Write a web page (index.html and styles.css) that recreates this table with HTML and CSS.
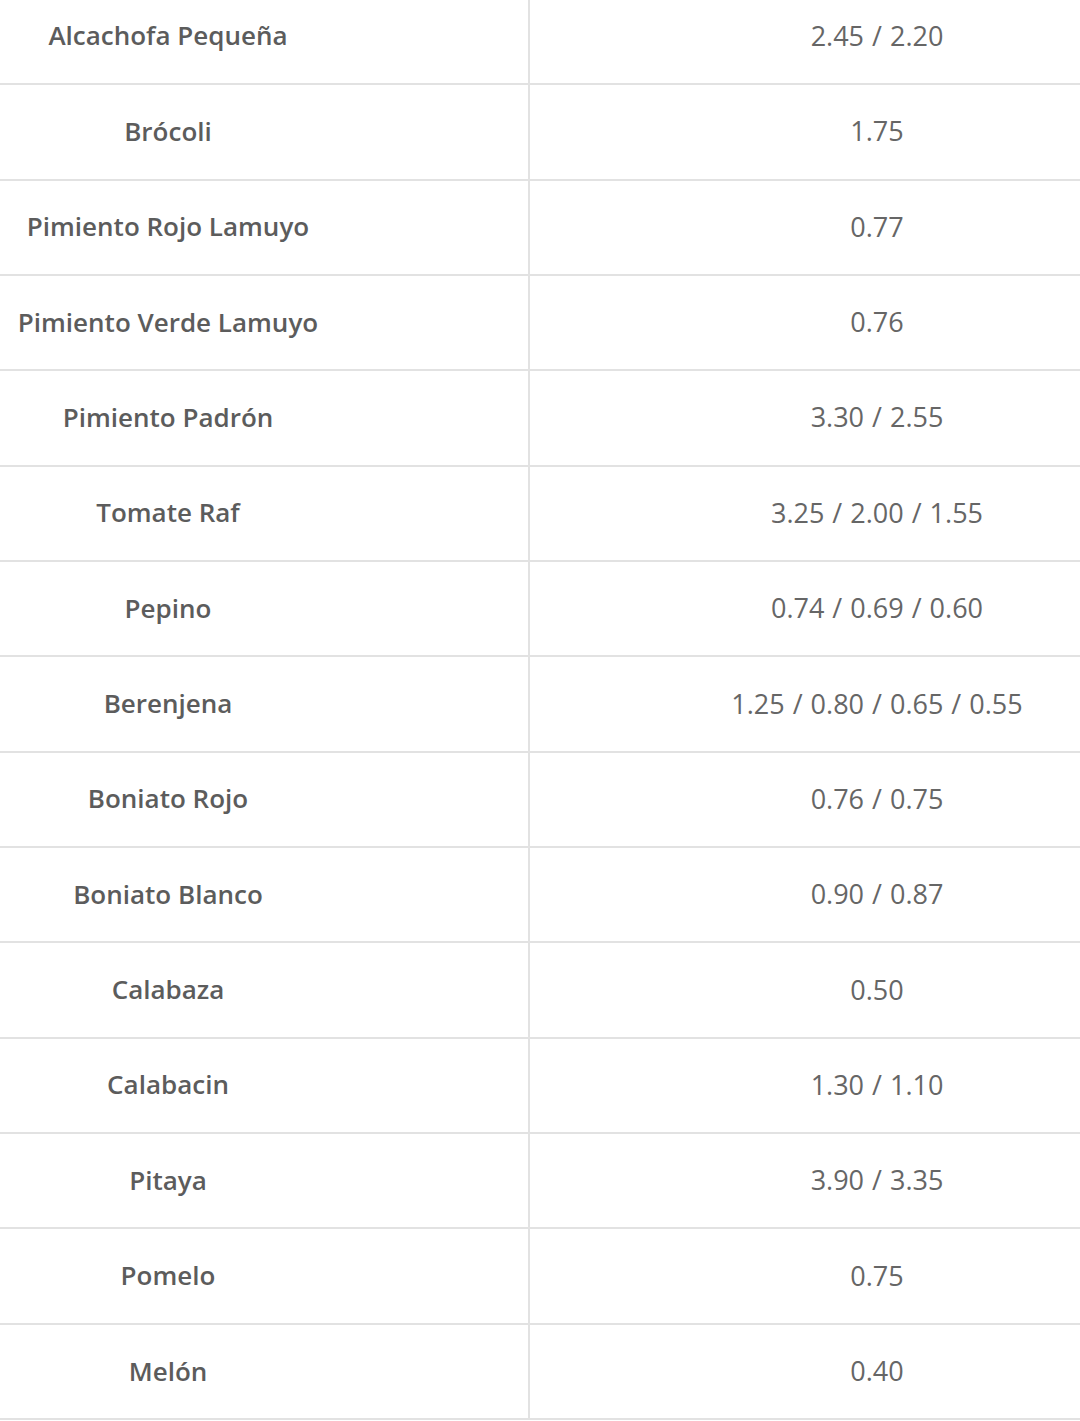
FILE: index.html
```html
<!DOCTYPE html>
<html lang="es">
<head>
<meta charset="utf-8">
<title>Precios</title>
<link rel="stylesheet" href="styles.css">
</head>
<body>
<div class="viewport">
  <div class="prices">
    <div class="name">Alcachofa Pequeña</div><div class="price">2.45 / 2.20</div>
    <div class="name">Brócoli</div><div class="price">1.75</div>
    <div class="name">Pimiento Rojo Lamuyo</div><div class="price">0.77</div>
    <div class="name">Pimiento Verde Lamuyo</div><div class="price">0.76</div>
    <div class="name">Pimiento Padrón</div><div class="price">3.30 / 2.55</div>
    <div class="name">Tomate Raf</div><div class="price">3.25 / 2.00 / 1.55</div>
    <div class="name">Pepino</div><div class="price">0.74 / 0.69 / 0.60</div>
    <div class="name">Berenjena</div><div class="price">1.25 / 0.80 / 0.65 / 0.55</div>
    <div class="name">Boniato Rojo</div><div class="price">0.76 / 0.75</div>
    <div class="name">Boniato Blanco</div><div class="price">0.90 / 0.87</div>
    <div class="name">Calabaza</div><div class="price">0.50</div>
    <div class="name">Calabacin</div><div class="price">1.30 / 1.10</div>
    <div class="name">Pitaya</div><div class="price">3.90 / 3.35</div>
    <div class="name">Pomelo</div><div class="price">0.75</div>
    <div class="name">Melón</div><div class="price">0.40</div>
  </div>
</div>
</body>
</html>
```

FILE: styles.css
```css
html, body {
  margin: 0;
  padding: 0;
  background: #ffffff;
}

.viewport {
  height: 1421px;
  overflow: hidden;
}

.prices {
  margin-top: -10.2px;
  display: grid;
  grid-template-columns: 530px 1fr;
  grid-auto-rows: 95.36px;
  font-family: "Open Sans", "Liberation Sans", sans-serif;
  font-size: 26px;
}

.name,
.price {
  display: flex;
  align-items: center;
  justify-content: center;
  padding-bottom: 2px;
  border-bottom: 2px solid #e2e2e2;
  box-sizing: border-box;
  white-space: nowrap;
}

.name {
  font-weight: 600;
  color: #5c5c5c;
  padding-right: 192px;
  border-right: 2px solid #e2e2e2;
}

.price {
  font-weight: 400;
  font-size: 27px;
  word-spacing: 1px;
  color: #666666;
  padding-left: 144px;
}
```
